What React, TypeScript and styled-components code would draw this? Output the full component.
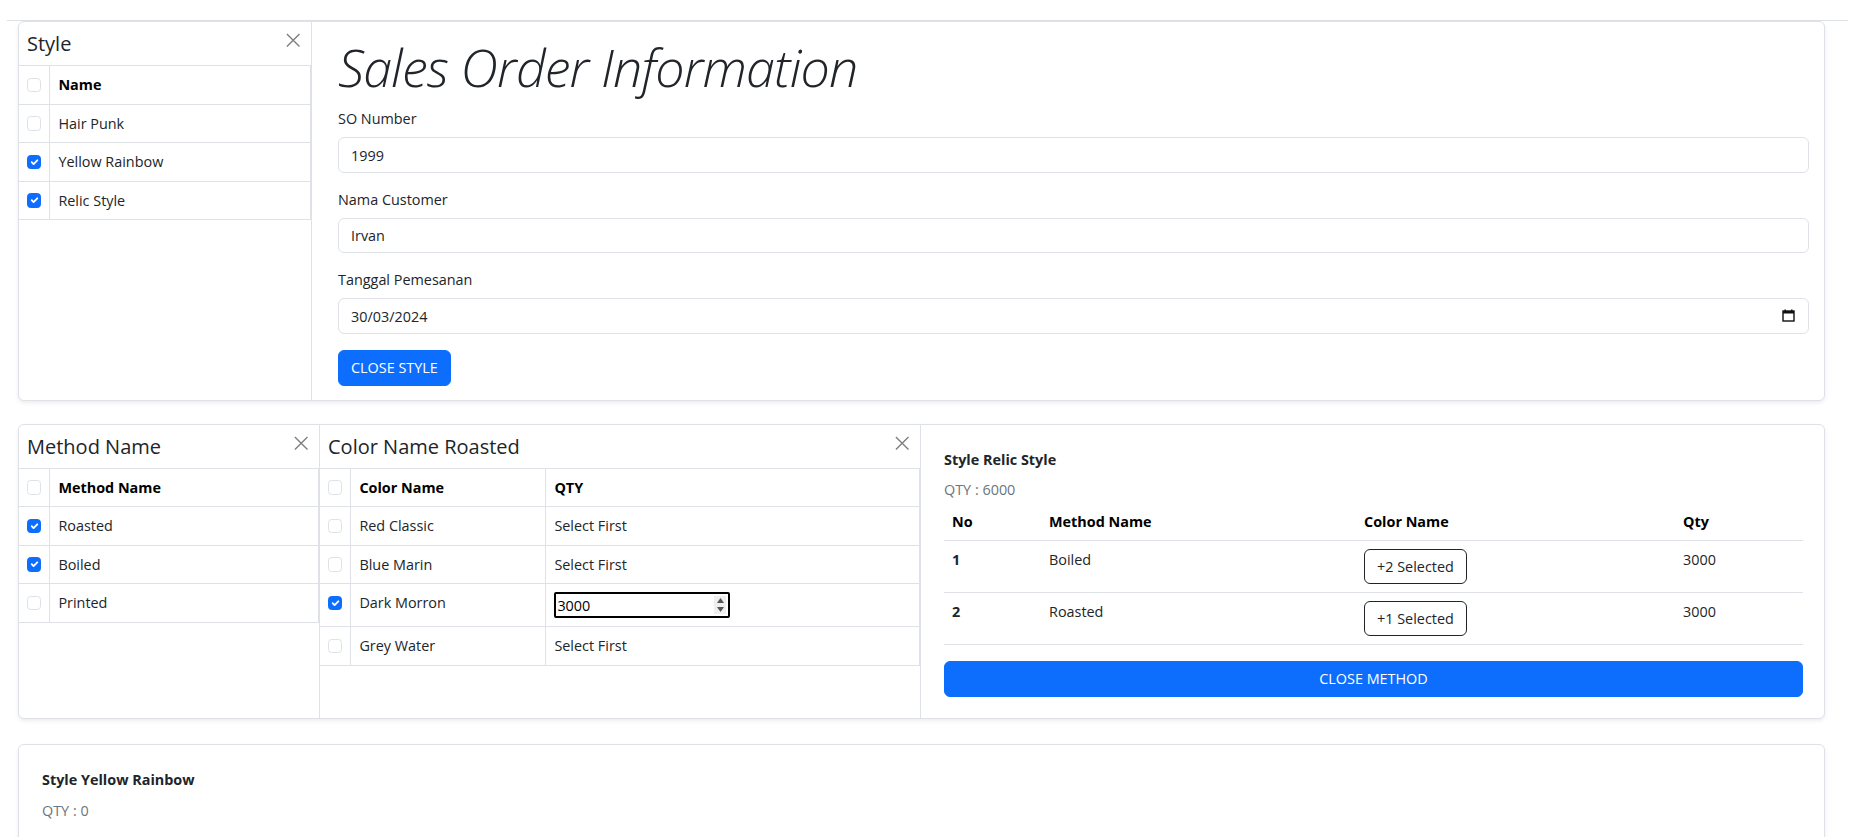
import React from "react";
import styled, { createGlobalStyle } from "styled-components";

const GlobalStyle = createGlobalStyle`
  html, body { margin: 0; padding: 0; background: #fff; }
  body {
    font-family: "Open Sans", "Noto Sans", sans-serif;
    font-size: 14.4px;
    line-height: 1.5;
    color: #212529;
  }
  *, *::before, *::after { box-sizing: border-box; }
`;

const Page = styled.div`
  padding: 20px 30px 0 18px;
`;

const TopRule = styled.div`
  height: 1px;
  background: #dee2e6;
  margin: 0 -23px 0 -11px;
`;

const Card = styled.section<{ $mt?: number }>`
  display: flex;
  margin-top: ${(p) => p.$mt ?? 0}px;
  border: 1px solid #dee2e6;
  border-radius: 6px;
  box-shadow: 0 2px 4px rgba(0, 0, 0, 0.075);
  background: #fff;
  overflow: hidden;
`;

const Panel = styled.div<{ $w: number }>`
  flex: 0 0 ${(p) => p.$w}px;
  width: ${(p) => p.$w}px;
  border-right: 1px solid #dee2e6;
  display: flex;
  flex-direction: column;
`;

const PanelHeader = styled.div`
  height: 44px;
  padding: 8px 8px;
  display: flex;
  justify-content: space-between;
  align-items: flex-start;
  border-bottom: 1px solid #dee2e6;
`;

const PanelTitle = styled.h5`
  margin: 0;
  font-size: 20px;
  font-weight: 400;
  line-height: 27px;
  color: #212529;
`;

const CloseBtn = styled.button`
  width: 14.4px;
  height: 14.4px;
  margin: 3px 3px 0 0;
  padding: 0;
  border: 0;
  background: transparent;
  opacity: 0.5;
  display: flex;
  cursor: pointer;
`;

const Table = styled.table`
  width: 100%;
  border-collapse: collapse;
  font-size: 14.4px;
  line-height: 21.6px;
  color: #212529;
`;

const HeadCell = styled.th<{ $check?: boolean; $w?: number }>`
  padding: 8px;
  border: 1px solid #dee2e6;
  border-top: 0;
  text-align: left;
  font-weight: 700;
  color: #000;
  vertical-align: top;
  ${(p) => (p.$check ? "width: 1%;" : "")}
  ${(p) => (p.$w ? `width: ${p.$w}px;` : "")}
  &:first-child { border-left: 0; }
`;

const Cell = styled.td<{ $check?: boolean }>`
  padding: 8px;
  border: 1px solid #dee2e6;
  vertical-align: top;
  color: #212529;
  ${(p) => (p.$check ? "width: 1%;" : "")}
  &:first-child { border-left: 0; }
`;

const Box = styled.span<{ $on?: boolean }>`
  display: flex;
  align-items: center;
  justify-content: center;
  width: 14.4px;
  height: 14.4px;
  margin-top: 3.6px;
  border: 1px solid ${(p) => (p.$on ? "#0d6efd" : "#dee2e6")};
  border-radius: 3.6px;
  background: ${(p) => (p.$on ? "#0d6efd" : "#fff")};
`;

const FormCol = styled.div`
  flex: 1;
  padding: 11px 15px 14px 26px;
`;

const Heading = styled.h1`
  margin: 0 0 8px;
  font-family: "Open Sans", "Noto Sans", sans-serif;
  font-size: 52px;
  line-height: 67.2px;
  letter-spacing: -0.9px;
  font-weight: 300;
  font-style: italic;
  color: #212529;
`;

const Field = styled.div`
  margin-bottom: 16px;
`;

const Label = styled.label`
  display: block;
  line-height: 21px;
  margin-bottom: 8px;
  color: #212529;
`;

const InputWrap = styled.div`
  position: relative;
`;

const TextInput = styled.input`
  display: block;
  width: 100%;
  height: 35.6px;
  padding: 6px 12px;
  font: inherit;
  font-size: 14.4px;
  line-height: 21.6px;
  color: #212529;
  background: #fff;
  border: 1px solid #dee2e6;
  border-radius: 6px;
  outline: none;
`;

const CalendarIcon = styled.svg`
  position: absolute;
  right: 14px;
  top: 11px;
  width: 13px;
  height: 13px;
`;

const PrimaryButton = styled.button<{ $block?: boolean }>`
  display: block;
  width: ${(p) => (p.$block ? "100%" : "auto")};
  height: 35.6px;
  padding: 6px 12px;
  font: inherit;
  font-size: 14.4px;
  line-height: 21.6px;
  color: #fff;
  background: #0d6efd;
  border: 1px solid #0d6efd;
  border-radius: 6px;
  text-align: center;
  cursor: pointer;
`;

const OutlineButton = styled.button`
  height: 35px;
  padding: 6px 12px;
  font: inherit;
  font-size: 14.4px;
  line-height: 21px;
  color: #212529;
  background: #fff;
  border: 1px solid #212529;
  border-radius: 6px;
  cursor: pointer;
`;

const NumberWrap = styled.div`
  position: relative;
  width: 176px;
  height: 26px;
`;

const NumberInput = styled.input`
  width: 100%;
  height: 100%;
  padding: 0 18px 0 1px;
  font: inherit;
  font-size: 14.4px;
  color: #000;
  border: 2px solid #000;
  border-radius: 2px;
  outline: none;
  background: #fff;
`;

const Spinner = styled.div`
  position: absolute;
  right: 4px;
  top: 4px;
  bottom: 4px;
  width: 12px;
  display: flex;
  flex-direction: column;
  justify-content: space-around;
  align-items: center;
  background: #efefef;
`;

const Summary = styled.div`
  flex: 1;
  padding: 24px 21px 21px 23px;
`;

const SummaryTitle = styled.div`
  font-weight: 700;
  line-height: 21.6px;
  margin-bottom: 9px;
  color: #212529;
`;

const Muted = styled.div<{ $mb?: number }>`
  color: #6c757d;
  line-height: 21.6px;
  margin-bottom: ${(p) => p.$mb ?? 0}px;
`;

const SumTable = styled.table`
  width: 100%;
  border-collapse: collapse;
  line-height: 21.6px;
  margin-bottom: 16px;
`;

const SumHead = styled.th<{ $w?: number }>`
  padding: 8px;
  text-align: left;
  font-weight: 700;
  color: #000;
  border-bottom: 1px solid #dee2e6;
  vertical-align: top;
  ${(p) => (p.$w ? `width: ${p.$w}px;` : "")}
`;

const SumCell = styled.td<{ $bold?: boolean }>`
  padding: 8px;
  border-bottom: 1px solid #dee2e6;
  vertical-align: top;
  color: #212529;
  font-weight: ${(p) => (p.$bold ? 700 : 400)};
`;

const FooterBody = styled.div`
  flex: 1;
  padding: 24px 23px 24px 23px;
`;

const Check = ({ on }: { on?: boolean }) => (
  <Box $on={on}>
    {on && (
      <svg viewBox="0 0 20 20" width="100%" height="100%">
        <path d="m6 10 3 3 6-6" fill="none" stroke="#fff" strokeWidth="3" strokeLinecap="round" strokeLinejoin="round" />
      </svg>
    )}
  </Box>
);

const XIcon = () => (
  <svg viewBox="0 0 16 16" width="14.4" height="14.4">
    <path d="M1 1 15 15M15 1 1 15" stroke="#000" strokeWidth="1.5" fill="none" />
  </svg>
);

const styleRows = [
  { name: "Hair Punk", on: false },
  { name: "Yellow Rainbow", on: true },
  { name: "Relic Style", on: true },
];

const methodRows = [
  { name: "Roasted", on: true },
  { name: "Boiled", on: true },
  { name: "Printed", on: false },
];

const colorRows = [
  { name: "Red Classic", on: false, qty: "" },
  { name: "Blue Marin", on: false, qty: "" },
  { name: "Dark Morron", on: true, qty: "3000" },
  { name: "Grey Water", on: false, qty: "" },
];

const summaryRows = [
  { no: 1, method: "Boiled", selected: "+2 Selected", qty: 3000 },
  { no: 2, method: "Roasted", selected: "+1 Selected", qty: 3000 },
];

export default function App() {
  return (
    <>
      <GlobalStyle />
      <Page>
        <TopRule />
        <Card>
          <Panel $w={293}>
            <PanelHeader>
              <PanelTitle>Style</PanelTitle>
              <CloseBtn aria-label="close"><XIcon /></CloseBtn>
            </PanelHeader>
            <Table>
              <thead>
                <tr>
                  <HeadCell $check><Check /></HeadCell>
                  <HeadCell>Name</HeadCell>
                </tr>
              </thead>
              <tbody>
                {styleRows.map((r) => (
                  <tr key={r.name}>
                    <Cell $check><Check on={r.on} /></Cell>
                    <Cell>{r.name}</Cell>
                  </tr>
                ))}
              </tbody>
            </Table>
          </Panel>
          <FormCol>
            <Heading>Sales Order Information</Heading>
            <Field>
              <Label>SO Number</Label>
              <TextInput defaultValue="1999" />
            </Field>
            <Field>
              <Label>Nama Customer</Label>
              <TextInput defaultValue="Irvan" />
            </Field>
            <Field>
              <Label>Tanggal Pemesanan</Label>
              <InputWrap>
                <TextInput defaultValue="30/03/2024" />
                <CalendarIcon viewBox="0 0 13 13">
                  <rect x="1" y="2" width="11" height="10" fill="none" stroke="#111" strokeWidth="1.4" />
                  <rect x="1" y="2" width="11" height="2.5" fill="#111" />
                  <rect x="2.5" y="0.5" width="1.5" height="2" fill="#111" />
                  <rect x="9" y="0.5" width="1.5" height="2" fill="#111" />
                </CalendarIcon>
              </InputWrap>
            </Field>
            <PrimaryButton>CLOSE STYLE</PrimaryButton>
          </FormCol>
        </Card>

        <Card $mt={23}>
          <Panel $w={301}>
            <PanelHeader>
              <PanelTitle>Method Name</PanelTitle>
              <CloseBtn aria-label="close"><XIcon /></CloseBtn>
            </PanelHeader>
            <Table>
              <thead>
                <tr>
                  <HeadCell $check><Check /></HeadCell>
                  <HeadCell>Method Name</HeadCell>
                </tr>
              </thead>
              <tbody>
                {methodRows.map((r) => (
                  <tr key={r.name}>
                    <Cell $check><Check on={r.on} /></Cell>
                    <Cell>{r.name}</Cell>
                  </tr>
                ))}
              </tbody>
            </Table>
          </Panel>
          <Panel $w={601}>
            <PanelHeader>
              <PanelTitle>Color Name Roasted</PanelTitle>
              <CloseBtn aria-label="close"><XIcon /></CloseBtn>
            </PanelHeader>
            <Table>
              <thead>
                <tr>
                  <HeadCell $check><Check /></HeadCell>
                  <HeadCell $w={195}>Color Name</HeadCell>
                  <HeadCell>QTY</HeadCell>
                </tr>
              </thead>
              <tbody>
                {colorRows.map((r) => (
                  <tr key={r.name}>
                    <Cell $check><Check on={r.on} /></Cell>
                    <Cell>{r.name}</Cell>
                    <Cell>
                      {r.on ? (
                        <NumberWrap>
                          <NumberInput defaultValue={r.qty} />
                          <Spinner>
                            <svg width="7" height="5" viewBox="0 0 7 5"><path d="M3.5 0 7 5H0z" fill="#555" /></svg>
                            <svg width="7" height="5" viewBox="0 0 7 5"><path d="M0 0h7L3.5 5z" fill="#555" /></svg>
                          </Spinner>
                        </NumberWrap>
                      ) : (
                        "Select First"
                      )}
                    </Cell>
                  </tr>
                ))}
              </tbody>
            </Table>
          </Panel>
          <Summary>
            <SummaryTitle>Style Relic Style</SummaryTitle>
            <Muted $mb={2}>QTY : 6000</Muted>
            <SumTable>
              <thead>
                <tr>
                  <SumHead $w={97}>No</SumHead>
                  <SumHead $w={315}>Method Name</SumHead>
                  <SumHead $w={319}>Color Name</SumHead>
                  <SumHead>Qty</SumHead>
                </tr>
              </thead>
              <tbody>
                {summaryRows.map((r) => (
                  <tr key={r.no}>
                    <SumCell $bold>{r.no}</SumCell>
                    <SumCell>{r.method}</SumCell>
                    <SumCell><OutlineButton>{r.selected}</OutlineButton></SumCell>
                    <SumCell>{r.qty}</SumCell>
                  </tr>
                ))}
              </tbody>
            </SumTable>
            <PrimaryButton $block>CLOSE METHOD</PrimaryButton>
          </Summary>
        </Card>

        <Card $mt={25}>
          <FooterBody>
            <SummaryTitle>Style Yellow Rainbow</SummaryTitle>
            <Muted>QTY : 0</Muted>
          </FooterBody>
        </Card>
      </Page>
    </>
  );
}
